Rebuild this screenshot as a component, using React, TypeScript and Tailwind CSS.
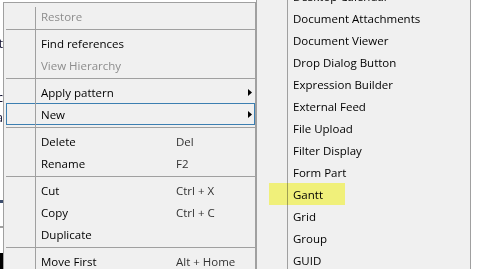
import { Fragment } from 'react';

type Item = { label?: string; key?: string; disabled?: boolean; sub?: boolean; active?: boolean; sep?: boolean };

const mainItems: Item[] = [
  { label: 'Restore', disabled: true },
  { sep: true },
  { label: 'Find references' },
  { label: 'View Hierarchy', disabled: true },
  { sep: true },
  { label: 'Apply pattern', sub: true },
  { label: 'New', sub: true, active: true },
  { sep: true },
  { label: 'Delete', key: 'Del' },
  { label: 'Rename', key: 'F2' },
  { sep: true },
  { label: 'Cut', key: 'Ctrl + X' },
  { label: 'Copy', key: 'Ctrl + C' },
  { label: 'Duplicate' },
  { sep: true },
  { label: 'Move First', key: 'Alt + Home' },
];

const subItems = [
  'Desktop Calendar',
  'Document Attachments',
  'Document Viewer',
  'Drop Dialog Button',
  'Expression Builder',
  'External Feed',
  'File Upload',
  'Filter Display',
  'Form Part',
  'Gantt',
  'Grid',
  'Group',
  'GUID',
];

function Arrow() {
  return (
    <svg width="4" height="7" viewBox="0 0 4 7" className="ml-auto shrink-0">
      <path d="M0 0 L4 3.5 L0 7 Z" fill="#000" />
    </svg>
  );
}

// pieces of the window behind the menu
function BackStrip() {
  return (
    <div className="w-[3px] h-full shrink-0 flex flex-col overflow-hidden bg-white text-[12px] leading-[12px] text-[#101030]">
      <div className="h-[38px]" />
      <div className="h-[12px] flex justify-end">t</div>
      <div className="h-[42px]" />
      <div className="h-[12px] flex justify-end">c</div>
      <div className="h-[8px]" />
      <div className="h-[12px] flex justify-end">a</div>
      <div className="h-[76px]" />
      <div className="h-[3px] bg-[#3d4f6e]" />
      <div className="h-[23px]" />
      <div className="h-[2px] bg-[#a0a0a0]" />
      <div className="h-[25px]" />
      <div className="h-[16px] bg-black" />
    </div>
  );
}

function MainMenu() {
  return (
    <div className="relative mt-[2px] w-[253px] shrink-0 border border-[#a0a0a0] bg-[#f0f0f0] pt-[2px] pb-4 flex flex-col">
      <div className="absolute left-[31px] top-[4px] bottom-0 w-px bg-[#a0a0a0]" />
      {mainItems.map((it, i) => (
        <Fragment key={i}>
          {it.sep ? (
            <div className="h-[5px] flex items-center pl-[2px]">
              <div className="h-px w-full bg-[#a0a0a0]" />
            </div>
          ) : (
            <div
              className={
                it.active
                  ? 'h-[22px] ml-[2px] border border-[#3c7fb1] flex items-center pt-px pl-[34px] pr-[2px]'
                  : 'h-[22px] flex items-center pt-px pl-[37px] pr-[3px]'
              }
            >
              <span className={`w-[135px] shrink-0 ${it.disabled ? 'text-[#8d8d8d]' : 'text-black'}`}>{it.label}</span>
              {it.key && <span className="text-[#333]">{it.key}</span>}
              {it.sub && <Arrow />}
            </div>
          )}
        </Fragment>
      ))}
    </div>
  );
}

function SubMenu() {
  return (
    <div className="relative -mt-[16px] w-[215px] shrink-0 border border-[#a0a0a0] bg-[#f0f0f0] flex flex-col">
      <div className="absolute left-[30px] top-0 bottom-0 w-px bg-[#a0a0a0]" />
      {subItems.map((s) => (
        <div key={s} className="relative h-[22px] flex items-center pt-px pl-[36px] text-black">
          {s === 'Gantt' && <div className="absolute left-[12px] top-0 w-[76px] h-full bg-[#ffff82] mix-blend-multiply" />}
          <span className="relative">{s}</span>
        </div>
      ))}
    </div>
  );
}

export default function App() {
  return (
    <div className="w-[485px] h-[269px] overflow-hidden bg-white flex items-start font-['Open_Sans','Noto_Sans',sans-serif] text-[11.5px]">
      <BackStrip />
      <MainMenu />
      <SubMenu />
    </div>
  );
}
